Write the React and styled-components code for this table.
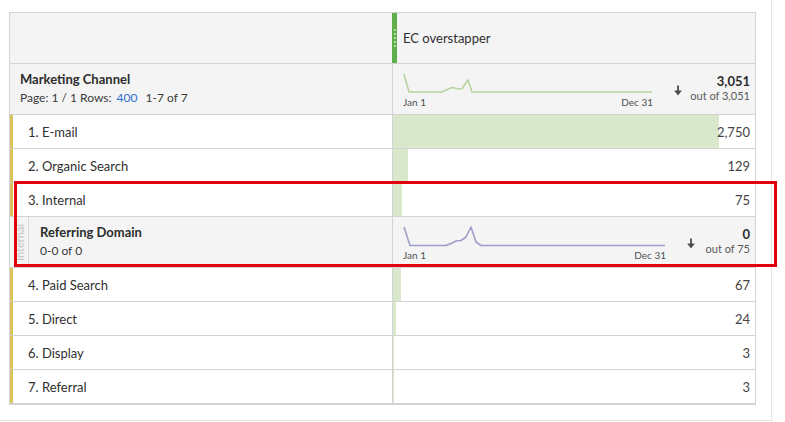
import styled, { createGlobalStyle } from "styled-components";

const TOTAL = 3051;
const BAR_SPACE = 362;

const rows = [
  { id: 1, name: "E-mail", value: 2750 },
  { id: 2, name: "Organic Search", value: 129 },
  { id: 3, name: "Internal", value: 75, open: true },
  { id: 4, name: "Paid Search", value: 67 },
  { id: 5, name: "Direct", value: 24 },
  { id: 6, name: "Display", value: 3 },
  { id: 7, name: "Referral", value: 3 },
];

const mainTrend =
  "M1 3 L6 21 L39 21 L49 16.5 L56 18 L59 17.5 L65 9 L69 21 L249 21";
const subTrend =
  "M1 3 L7 21.5 L43 21.5 L48 19.5 L53 17 L58 16.5 L63 13 L68 3 L73 18 L78 21.5 L262 21.5";

function App() {
  return (
    <>
      <GlobalStyle />
      <Panel>
        <Table>
          <HeaderRow>
            <HeaderBlank />
            <ColumnHead>
              <Grip>
                <Dot />
                <Dot />
                <Dot />
                <Dot />
                <Dot />
              </Grip>
              <ColumnTitle>EC overstapper</ColumnTitle>
            </ColumnHead>
          </HeaderRow>

          <SummaryRow>
            <SummaryLabel>
              <DimTitle>Marketing Channel</DimTitle>
              <Paging>
                Page: 1 / 1 Rows: <RowsLink>400</RowsLink> <Range>1-7 of 7</Range>
              </Paging>
            </SummaryLabel>
            <SummaryValue>
              <Trend width={250} path={mainTrend} color="#b7d39f" />
              <SortArrow />
              <Totals>
                <TotalNum>3,051</TotalNum>
                <TotalOf>out of 3,051</TotalOf>
              </Totals>
            </SummaryValue>
          </SummaryRow>

          {rows.map((r) => (
            <div key={r.id}>
              <DataRow>
                <RowLabel>
                  {r.id}. {r.name}
                </RowLabel>
                <RowValue
                  $bar={Math.max(1, Math.round((r.value / TOTAL) * BAR_SPACE))}
                >
                  {r.value.toLocaleString("en-US")}
                </RowValue>
              </DataRow>
              {r.open && (
                <SubRow>
                  <SubLabel>
                    <ParentStrip>
                      <ParentName>Internal</ParentName>
                    </ParentStrip>
                    <SubText>
                      <DimTitle>Referring Domain</DimTitle>
                      <Paging>0-0 of 0</Paging>
                    </SubText>
                  </SubLabel>
                  <SummaryValue>
                    <Trend width={263} path={subTrend} color="#9d9dca" />
                    <SortArrow />
                    <Totals>
                      <TotalNum>0</TotalNum>
                      <TotalOf>out of 75</TotalOf>
                    </Totals>
                  </SummaryValue>
                </SubRow>
              )}
            </div>
          ))}
        </Table>
        <Highlight />
      </Panel>
    </>
  );
}

function Trend({ width, path, color }) {
  return (
    <TrendBox $w={width}>
      <svg width={width} height="24" viewBox={`0 0 ${width} 24`}>
        <path d={path} fill="none" stroke={color} strokeWidth="1.6" strokeLinejoin="round" />
      </svg>
      <TrendAxis>
        <span>Jan 1</span>
        <span>Dec 31</span>
      </TrendAxis>
    </TrendBox>
  );
}

function SortArrow() {
  return (
    <ArrowBox>
      <svg width="10" height="11" viewBox="0 0 10 11">
        <path d="M5 0.5 V8.5" stroke="#4b4b4b" strokeWidth="1.8" />
        <path d="M1.2 5.6 L5 10.4 L8.8 5.6 Z" fill="#4b4b4b" />
      </svg>
    </ArrowBox>
  );
}

export default App;

const GlobalStyle = createGlobalStyle`
  body {
    margin: 0;
    background: #fff;
    font-family: Lato, "Open Sans", sans-serif;
    color: #2c2c2c;
  }
`;

const Panel = styled.div`
  position: relative;
  width: 772px;
  height: 421px;
  padding: 12px 0 0 9px;
  box-sizing: border-box;
  border-right: 1px solid #e4e4e4;
  border-bottom: 1px solid #e4e4e4;
`;

const Table = styled.div`
  width: 747px;
  border: 1px solid #d3d3d3;
  box-sizing: border-box;
  background: #fff;
`;

const HeaderRow = styled.div`
  display: grid;
  grid-template-columns: 382px 1fr;
  height: 51px;
  border-bottom: 1px solid #d3d3d3;
  box-sizing: border-box;
  background: #f4f4f4;
`;

const HeaderBlank = styled.div``;

const ColumnHead = styled.div`
  display: flex;
  align-items: stretch;
`;

const Grip = styled.div`
  width: 5px;
  background: #5fae4c;
  display: flex;
  flex-direction: column;
  align-items: center;
  justify-content: center;
  gap: 2px;
`;

const Dot = styled.span`
  width: 2px;
  height: 2px;
  border-radius: 50%;
  background: #cfe6c6;
`;

const ColumnTitle = styled.div`
  display: flex;
  align-items: center;
  padding-left: 6px;
  font-size: 13px;
  color: #2f2f2f;
`;

const SummaryRow = styled.div`
  display: grid;
  grid-template-columns: 383px 362px;
  height: 51px;
  border-bottom: 1px solid #d3d3d3;
  box-sizing: border-box;
  background: #f4f4f4;
`;

const SummaryLabel = styled.div`
  border-right: 1px solid #d3d3d3;
  padding: 7px 0 0 10px;
`;

const DimTitle = styled.div`
  font-size: 13px;
  font-weight: 700;
  line-height: 17px;
  color: #2c2c2c;
`;

const Paging = styled.div`
  margin-top: 2px;
  font-size: 12px;
  line-height: 16px;
  color: #3a3a3a;
`;

const RowsLink = styled.span`
  color: #2c6fcf;
  margin: 0 3px 0 2px;
`;

const Range = styled.span`
  margin-left: 2px;
`;

const SummaryValue = styled.div`
  display: flex;
  align-items: center;
  padding: 0 5px 0 10px;
`;

const TrendBox = styled.div`
  width: ${(p) => p.$w}px;
  display: flex;
  flex-direction: column;
  margin-top: 1px;
`;

const TrendAxis = styled.div`
  display: flex;
  justify-content: space-between;
  font-size: 10px;
  line-height: 12px;
  color: #505050;
  margin-top: 1px;
`;

const ArrowBox = styled.div`
  margin-left: 20px;
  display: flex;
  margin-top: 2px;
`;

const Totals = styled.div`
  flex: 1;
  display: flex;
  flex-direction: column;
  align-items: flex-end;
  margin-top: -3px;
`;

const TotalNum = styled.div`
  font-size: 13px;
  font-weight: 700;
  line-height: 16px;
  color: #2c2c2c;
`;

const TotalOf = styled.div`
  font-size: 11px;
  line-height: 14px;
  color: #5a5a5a;
`;

const DataRow = styled.div`
  display: grid;
  grid-template-columns: 383px 362px;
  height: 34px;
  border-bottom: 1px solid #d3d3d3;
  box-sizing: border-box;
`;

const RowLabel = styled.div`
  display: flex;
  align-items: center;
  padding-left: 18px;
  border-right: 1px solid #d3d3d3;
  box-shadow: inset 3px 0 0 #d8c35c;
  font-size: 13px;
  color: #2f2f2f;
`;

const RowValue = styled.div`
  display: flex;
  align-items: center;
  justify-content: flex-end;
  padding-right: 5px;
  font-size: 13px;
  color: #444;
  background: linear-gradient(
    to right,
    #d9e7ca ${(p) => p.$bar}px,
    #fff ${(p) => p.$bar}px
  );
`;

const SubRow = styled.div`
  display: grid;
  grid-template-columns: 383px 362px;
  height: 51px;
  border-bottom: 1px solid #d3d3d3;
  box-sizing: border-box;
  background: #f4f4f4;
`;

const SubLabel = styled.div`
  display: flex;
  border-right: 1px solid #d3d3d3;
`;

const ParentStrip = styled.div`
  width: 18px;
  border-right: 1px solid #d8d8d8;
  display: flex;
  justify-content: center;
  align-items: center;
  overflow: hidden;
`;

const ParentName = styled.span`
  writing-mode: vertical-rl;
  transform: rotate(180deg);
  font-size: 11px;
  color: #c4c4c4;
  white-space: nowrap;
`;

const SubText = styled.div`
  padding: 7px 0 0 11px;
`;

const Highlight = styled.div`
  position: absolute;
  left: 14px;
  top: 181px;
  width: 763px;
  height: 86px;
  box-sizing: border-box;
  border: 3px solid #e2000f;
  pointer-events: none;
`;
